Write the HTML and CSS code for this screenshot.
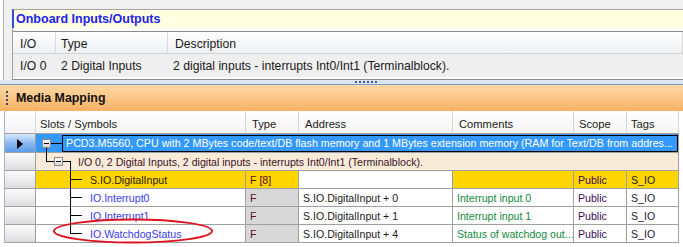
FILE: index.html
```html
<!DOCTYPE html>
<html lang="en">
<head>
  <meta charset="UTF-8">
  <title>Media Mapping</title>
  <link rel="stylesheet" href="styles.css">
</head>
<body>

  <div class="io-panel">
    <div class="io-title">Onboard Inputs/Outputs</div>
    <div class="io-body">
      <table class="io-table">
        <tr>
          <th class="io-col">I/O</th>
          <th class="type-col">Type</th>
          <th>Description</th>
        </tr>
        <tr>
          <td>I/O 0</td>
          <td>2 Digital Inputs</td>
          <td>2 digital inputs - interrupts Int0/Int1 (Terminalblock).</td>
        </tr>
      </table>
    </div>
  </div>

  <div class="splitter"><span class="grip"></span></div>

  <div class="media-head"><span class="media-grip"></span>Media Mapping</div>

  <div class="grid-wrap">
    <table class="grid">
      <tr>
        <th class="rh-col"></th>
        <th class="slot-col">Slots / Symbols</th>
        <th class="t-col">Type</th>
        <th class="addr-col">Address</th>
        <th class="com-col">Comments</th>
        <th class="scope-col">Scope</th>
        <th class="tag-col">Tags</th>
      </tr>
      <tr class="sel-row">
        <td class="rh rh-sel"><span class="arrow"></span></td>
        <td colspan="6" class="sel-cell">
          <div class="node">
            <span class="toggle"></span>
            <span class="focus">PCD3.M5560, CPU with 2 MBytes code/text/DB flash memory and 1 MBytes extension memory (RAM for Text/DB from addres...</span>
          </div>
        </td>
      </tr>
      <tr class="dev-row">
        <td class="rh"></td>
        <td colspan="6" class="dev-cell">
          <div class="node node-dev">
            <span class="toggle"></span>
            <span class="dev-text">I/O 0, 2 Digital Inputs, 2 digital inputs - interrupts Int0/Int1 (Terminalblock).</span>
          </div>
        </td>
      </tr>
      <tr class="gold-row">
        <td class="rh"></td>
        <td class="sym sym-group">S.IO.DigitalInput</td>
        <td class="ftype">F [8]</td>
        <td class="addr blank"></td>
        <td class="com"></td>
        <td class="scope">Public</td>
        <td class="tag">S_IO</td>
      </tr>
      <tr>
        <td class="rh"></td>
        <td class="sym">IO.Interrupt0</td>
        <td class="ftype">F</td>
        <td class="addr">S.IO.DigitalInput + 0</td>
        <td class="com">Interrupt input 0</td>
        <td class="scope">Public</td>
        <td class="tag">S_IO</td>
      </tr>
      <tr>
        <td class="rh"></td>
        <td class="sym">IO.Interrupt1</td>
        <td class="ftype">F</td>
        <td class="addr">S.IO.DigitalInput + 1</td>
        <td class="com">Interrupt input 1</td>
        <td class="scope">Public</td>
        <td class="tag">S_IO</td>
      </tr>
      <tr>
        <td class="rh"></td>
        <td class="sym">IO.WatchdogStatus</td>
        <td class="ftype">F</td>
        <td class="addr">S.IO.DigitalInput + 4</td>
        <td class="com">Status of watchdog out...</td>
        <td class="scope">Public</td>
        <td class="tag">S_IO</td>
      </tr>
    </table>

    <!-- tree connectors and the red mark drawn over the grid -->
    <svg class="overlay" width="683" height="136" viewBox="0 0 683 136">
      <g stroke="#000" stroke-width="1" fill="none" shape-rendering="crispEdges">
        <path d="M51 32.5H62"/>
        <path d="M46.5 37V50.5H54"/>
        <path d="M63 50.5H70.5V122.5"/>
        <path d="M70.5 68.5H82M70.5 86.5H82M70.5 104.5H82M70.5 122.5H82"/>
      </g>
      <ellipse cx="133" cy="120" rx="79" ry="11.5" fill="none" stroke="#e01420" stroke-width="2"/>
    </svg>
  </div>

</body>
</html>
```

FILE: styles.css
```css
* {
  margin: 0;
  padding: 0;
  box-sizing: border-box;
}

body {
  font-family: "Liberation Sans", Arial, sans-serif;
  font-size: 12px;
  color: #1a1a1a;
  background-color: #fff;
  width: 683px;
  height: 247px;
  overflow: hidden;
}

/* top panel */

.io-panel {
  margin-left: 3px;
  border-left: 1px solid #b4b4b4;
  background-color: #f0f0f0;
  padding: 9px 0 0 8px;
}

.io-title {
  height: 19px;
  border-top: 1px solid #a4a4a4;
  border-left: 2px solid #2f4fd8;
  background-color: #ffffe1;
  padding-left: 2px;
  font-size: 12.5px;
  font-weight: bold;
  line-height: 18px;
  color: #2222ee;
}

.io-body {
  background-color: #fff;
  border-left: 1px solid #a0a0a0;
  border-bottom: 1px solid #8a8a8a;
  padding: 3px 0 2px;
}

.io-table {
  width: 100%;
  border-spacing: 0;
  border-top: 1px solid #8c8c8c;
  table-layout: fixed;
  font-size: 12.2px;
}

.io-table th {
  height: 22px;
  padding: 2px 0 0 7px;
  font-weight: normal;
  text-align: left;
  background: linear-gradient(#ffffff, #edeff3);
  border-bottom: 1px solid #d2d2d2;
  border-right: 1px solid #dadada;
}

.io-table .io-col {
  width: 43px;
}

.io-table .type-col {
  width: 112px;
  padding-left: 5px;
}

.io-table td {
  height: 23px;
  padding-left: 5px;
  background-color: #efefef;
  white-space: nowrap;
}

.io-table td:first-child {
  padding-left: 7px;
}

/* splitter between the panels */

.splitter {
  height: 5px;
  background-color: #dce6f4;
  border-bottom: 1px solid #7d9bd0;
  display: flex;
  justify-content: center;
  padding: 1px 0 0 49px;
}

.grip {
  width: 22px;
  height: 2px;
  background: repeating-linear-gradient(90deg, #3d5d8f 0 2px, transparent 2px 4px);
}

.media-head {
  height: 26px;
  display: flex;
  align-items: center;
  gap: 8px;
  padding-left: 6px;
  background: linear-gradient(#fdd9a6, #f8b263);
  font-size: 12.4px;
  font-weight: bold;
  color: #111;
}

.media-grip {
  width: 2px;
  height: 14px;
  background: repeating-linear-gradient(#2c4a7c 0 2px, transparent 2px 4px);
}

/* media mapping grid */

.grid-wrap {
  position: relative;
  padding-left: 4px;
}

.grid {
  width: 675px;
  border-spacing: 0;
  border-left: 1px solid #9fb4d2;
  table-layout: fixed;
  font-size: 10.6px;
}

.grid th {
  height: 23px;
  padding: 3px 0 0 6px;
  font-size: 11.2px;
  font-weight: normal;
  text-align: left;
  color: #1a1a1a;
  background: linear-gradient(#ffffff, #f5f5f5);
  border-bottom: 1px solid #a0a0a0;
  border-right: 1px solid #d6d6d6;
}

.grid .rh-col { width: 31px; }
.grid .slot-col { width: 210px; padding-left: 4px; }
.grid .t-col { width: 53px; }
.grid .addr-col { width: 154px; }
.grid .com-col { width: 121px; }
.grid .scope-col { width: 53px; padding-left: 5px; }
.grid .tag-col { width: 52px; padding-left: 4px; }

.grid td {
  height: 18px;
  padding-left: 4px;
  border-bottom: 1px solid #a0a0a0;
  border-right: 1px solid #a0a0a0;
  white-space: nowrap;
  overflow: hidden;
}

.grid .rh {
  padding: 0;
  background: linear-gradient(#fbfbfb, #ededed 50%, #dcdcdc);
}

.grid .rh-sel {
  background: linear-gradient(#dbe9fb, #8dbaf0 50%, #5c9be6);
  vertical-align: middle;
  text-align: center;
}

.arrow {
  display: inline-block;
  width: 0;
  height: 0;
  border-left: 6px solid #000;
  border-top: 5px solid transparent;
  border-bottom: 5px solid transparent;
  vertical-align: middle;
}

.sel-row td {
  height: 19px;
}

.sel-cell {
  background-color: #3399ff;
  color: #fff;
}

.grid .sel-cell,
.grid .dev-cell {
  padding: 0;
}

.node {
  display: flex;
  align-items: center;
  height: 18px;
}

.toggle {
  flex: none;
  width: 9px;
  height: 9px;
  margin-left: 6px;
  border: 1px solid #8a8a8a;
  background: linear-gradient(#000, #000) center / 5px 1px no-repeat,
              linear-gradient(#ffffff, #d6d6d6);
}

.focus {
  flex: 1;
  min-width: 0;
  height: 17px;
  margin-left: 11px;
  padding-left: 3px;
  border: 1px solid #000;
  font-size: 10.7px;
  line-height: 15px;
  overflow: hidden;
}

.dev-cell {
  background-color: #f9ebd9;
  color: #3a1426;
}

.node-dev {
  height: 17px;
}

.node-dev .toggle {
  margin-left: 18px;
}

.dev-text {
  margin-left: 15px;
}

.grid .sym {
  padding-left: 54px;
  color: #3b3bf2;
}

.gold-row td {
  background-color: #ffd500;
}

.gold-row .sym-group {
  color: #2a1a08;
}

.gold-row .blank {
  background-color: #fff;
}

.ftype {
  background-color: #d8d8d8;
  color: #5a0a30;
}

.addr {
  color: #222;
}

.com {
  color: #138a3e;
}

.scope {
  color: #3e0a56;
}

.tag {
  color: #222234;
}

.overlay {
  position: absolute;
  top: 0;
  left: 0;
  pointer-events: none;
}
```
